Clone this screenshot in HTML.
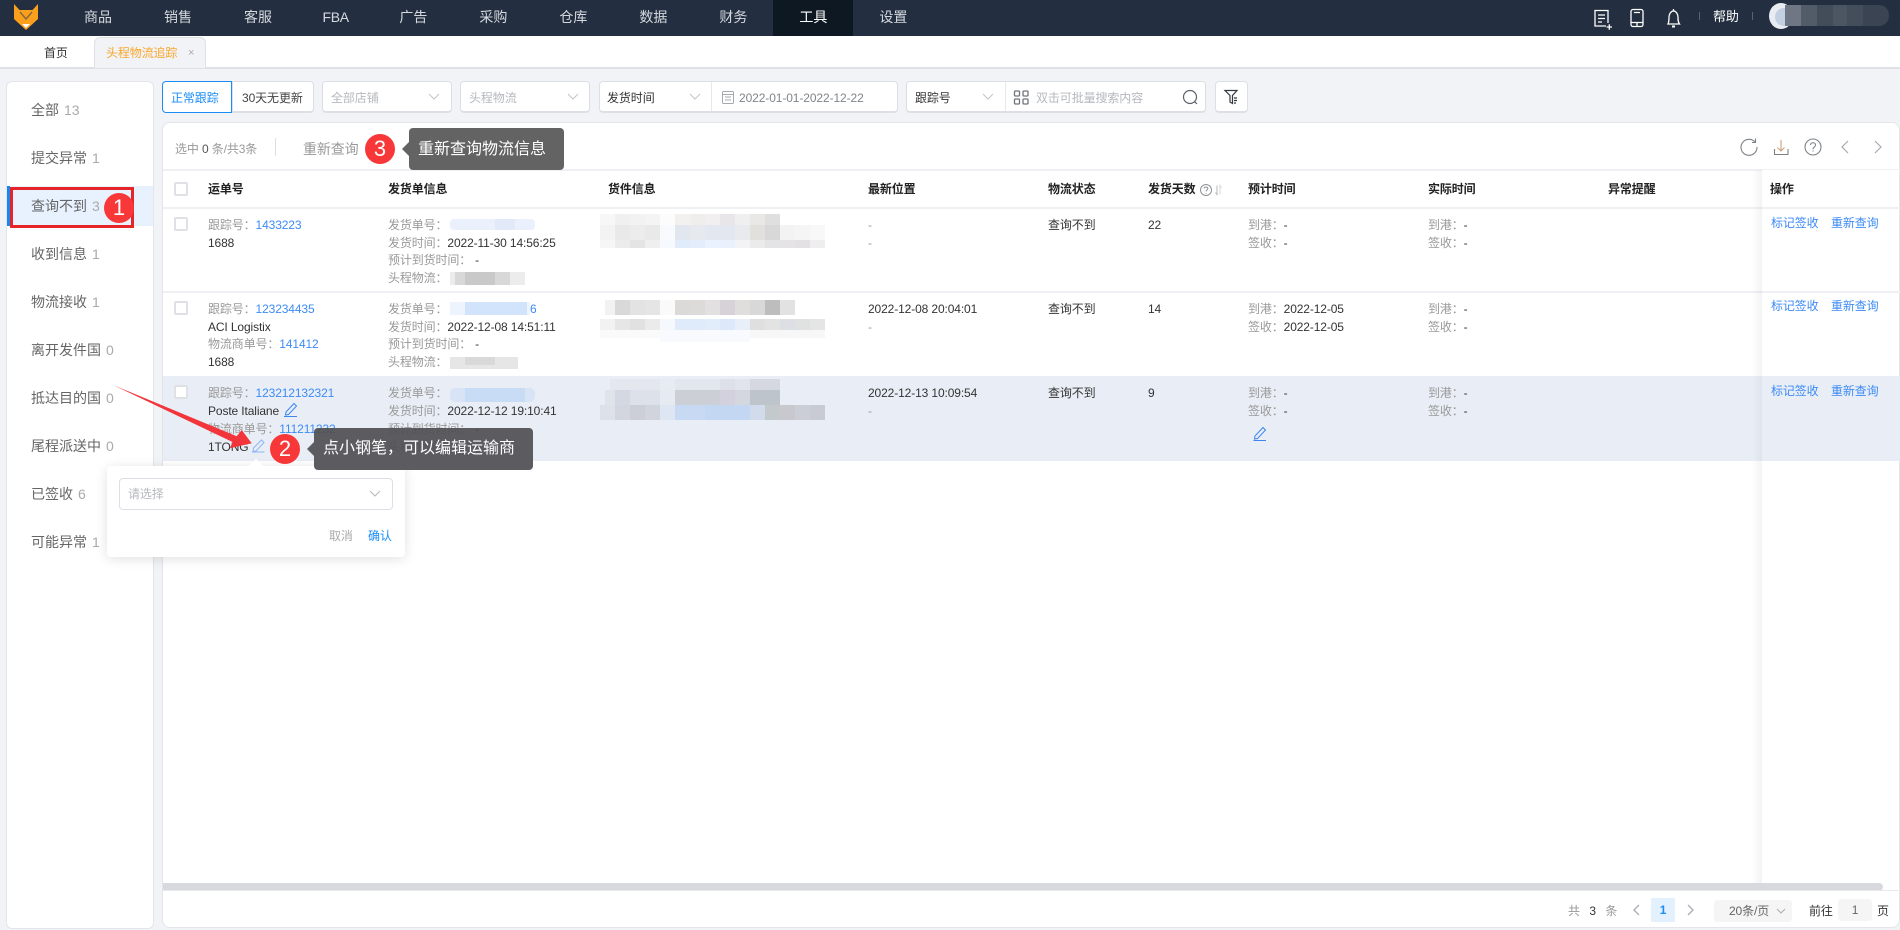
<!DOCTYPE html>
<html lang="zh-CN">
<head>
<meta charset="utf-8">
<title>头程物流追踪</title>
<style>
*{box-sizing:border-box}
html,body{margin:0;padding:0}
body{position:relative;width:1900px;height:930px;overflow:hidden;background:#f1f3f7;font-family:"Liberation Sans","Noto Sans CJK SC",sans-serif;font-size:12px;color:#333}
.a{position:absolute}
.t{position:absolute;white-space:nowrap;font-size:12px;line-height:18px;height:18px;color:#333;letter-spacing:-.12px}
.g{color:#999}
.b{color:#3d8bf5}
.h{font-weight:700;color:#222}
.nav{position:absolute;left:0;top:0;width:1900px;height:36px;background:#232f40}
.menu{position:absolute;left:58px;top:0;height:36px;display:flex}
.menu div{padding:0 26px;font-size:14px;line-height:34px;color:#d5d9df}
.menu div.fba{padding:0 24.5px;letter-spacing:-.3px}
.menu div.on{background:#0e1823;color:#fff}
.tabs{position:absolute;left:0;top:36px;width:1900px;height:33px;background:#fff;border-bottom:2px solid #dfe1e7}
.tab{position:absolute;left:94px;top:1px;width:112px;height:31px;background:#f1f3f7;border:1px solid #dfe1e7;border-bottom:none;border-radius:6px 6px 0 0}
.side{position:absolute;left:6px;top:81px;width:148px;height:848px;background:#fff;border:1px solid #e3e5ea;border-radius:6px}
.si{position:absolute;left:31px;font-size:14px;line-height:20px;height:20px;color:#666;white-space:nowrap}
.si span{color:#aaa;margin-left:5px}
.box{position:absolute;top:81px;height:32px;background:#fff;border:1px solid #dcdfe6;border-bottom-width:2px;border-radius:4px}
.ph{position:absolute;top:89px;font-size:12px;line-height:18px;color:#b5b8bd;white-space:nowrap;letter-spacing:-.1px}
.card{position:absolute;left:162px;top:122px;width:1738px;height:806px;background:#fff;border:1px solid #e3e5ea;border-radius:8px}
.line{position:absolute;left:163px;width:1737px;height:2px;background:#eff0f3}
.cb{position:absolute;left:174px;width:14px;height:14px;background:#fff;border:2px solid #dfe1e6;border-radius:2px}
.badge{position:absolute;width:30px;height:30px;border-radius:50%;background:#f83838;color:#fff;font-size:22px;line-height:30px;text-align:center}
.tip{position:absolute;color:#fff;font-size:16px;border-radius:4px;white-space:nowrap}
svg{position:absolute;overflow:visible}
</style>
</head>
<body>

<!-- top nav -->
<div class="nav"></div>
<svg style="left:0;top:0" width="60" height="36">
  <path d="M14 4 L19.500 10 L32.500 10 L38 4 L38 19 L26 30 L14 19 Z" fill="#fba01c"/>
  <path d="M20 12 L26 19 L32 12" fill="none" stroke="#8a6a3a" stroke-width="1.500"/>
  <path d="M22 24 L30 24 L26 28 Z" fill="#fff"/>
</svg>
<div class="menu">
  <div>商品</div><div>销售</div><div>客服</div><div class="fba">FBA</div><div>广告</div><div>采购</div><div>仓库</div><div>数据</div><div>财务</div><div class="on">工具</div><div>设置</div>
</div>
<svg style="left:1590px;top:6px" width="100" height="26" fill="none" stroke="#fff" stroke-width="1.300">
  <path d="M16 20 H5 V4.500 H18 V17"/><path d="M8 9 H15 M8 12.500 H15 M8 16 H12"/><path d="M16.500 21 H22 M19.300 18.200 V23.800"/>
  <rect x="41" y="3.500" width="12" height="17" rx="2"/><path d="M41 16.500 H53 M47 16.500 V20.500 M44 6.500 H50"/>
  <path d="M78 18 C79 16 79 14 79 11 C79 8 81 5 83.500 5 C86 5 88 8 88 11 C88 14 88 16 89.500 18 Z"/><path d="M82 20.500 H85" stroke-width="2"/><path d="M83.500 3 V5"/>
</svg>
<div class="a" style="left:1699px;top:12px;width:1px;height:8px;background:#59626f"></div>
<div class="t" style="left:1713px;top:8px;color:#fff;font-size:13px;">帮助</div>
<div class="a" style="left:1752px;top:12px;width:1px;height:8px;background:#59626f"></div>
<div class="a" style="left:1769px;top:3px;width:24px;height:26px;border-radius:50%;background:#e9edf2"></div>
<div class="a" style="left:1775px;top:8px;width:18px;height:18px;border-radius:50%;background:#c3d0e2"></div>
<div class="a" style="left:1785px;top:5px;width:104px;height:21px;border-radius:0 10px 10px 0;background:#3a4452"></div>
<div class="a" style="left:1785px;top:5px;width:16px;height:21px;background:#6e7783"></div>
<div class="a" style="left:1801px;top:5px;width:16px;height:21px;background:#525b68"></div>
<div class="a" style="left:1817px;top:5px;width:16px;height:21px;background:#434d5a"></div>
<div class="a" style="left:1833px;top:5px;width:14px;height:21px;background:#4c5562"></div>
<div class="a" style="left:1847px;top:5px;width:16px;height:21px;background:#444e5b"></div>

<!-- tabs -->
<div class="tabs"><div class="tab"></div></div>
<div class="t" style="left:44px;top:44px;color:#333">首页</div>
<div class="t" style="left:106px;top:44px;color:#f9a72b">头程物流追踪</div>
<div class="t" style="left:188px;top:44px;color:#aaa;font-size:11px">×</div>

<!-- sidebar -->
<div class="side"></div>
<div class="a" style="left:7px;top:186px;width:146px;height:40px;background:#e8f2fe"></div>
<div class="a" style="left:7px;top:186px;width:3px;height:40px;background:#1a86f0"></div>
<div class="si" style="top:100px">全部<span>13</span></div>
<div class="si" style="top:148px">提交异常<span>1</span></div>
<div class="si" style="top:196px">查询不到<span>3</span></div>
<div class="si" style="top:244px">收到信息<span>1</span></div>
<div class="si" style="top:292px">物流接收<span>1</span></div>
<div class="si" style="top:340px">离开发件国<span>0</span></div>
<div class="si" style="top:388px">抵达目的国<span>0</span></div>
<div class="si" style="top:436px">尾程派送中<span>0</span></div>
<div class="si" style="top:484px">已签收<span>6</span></div>
<div class="si" style="top:532px">可能异常<span>1</span></div>
<div class="a" style="left:10px;top:187px;width:124px;height:41px;border:3px solid #e6252b"></div>
<div class="badge" style="left:104px;top:193px">1</div>

<!-- filter row -->
<div class="box" style="left:232px;width:82px;border-radius:0 4px 4px 0"></div>
<div class="box" style="left:162px;width:70px;border:1px solid #1a8cf5;border-radius:4px 0 0 4px"></div>
<div class="ph" style="left:171px;color:#1a8cf5">正常跟踪</div>
<div class="ph" style="left:242px;color:#444">30天无更新</div>
<div class="box" style="left:322px;width:130px"></div>
<div class="ph" style="left:331px">全部店铺</div>
<div class="box" style="left:460px;width:130px"></div>
<div class="ph" style="left:469px">头程物流</div>
<div class="box" style="left:599px;width:299px"></div>
<div class="a" style="left:711px;top:82px;width:1px;height:29px;background:#e6e8ec"></div>
<div class="ph" style="left:607px;color:#333">发货时间</div>
<div class="ph" style="left:739px;color:#808589">2022-01-01-2022-12-22</div>
<div class="box" style="left:906px;width:300px"></div>
<div class="a" style="left:1005px;top:82px;width:1px;height:29px;background:#e6e8ec"></div>
<div class="ph" style="left:915px;color:#333">跟踪号</div>
<div class="ph" style="left:1036px">双击可批量搜索内容</div>
<div class="box" style="left:1215px;width:33px"></div>
<svg style="left:0;top:0" width="1300" height="120" fill="none" stroke="#c2c5ca" stroke-width="1">
  <path d="M429 94 L434 99 L439 94 M568 94 L573 99 L578 94 M690 94 L695 99 L700 94 M983 94 L988 99 L993 94"/>
  <g stroke="#a6aaaf"><rect x="722.500" y="91.500" width="11" height="12" rx="1"/><path d="M722.500 94.500 H733.500 M725 97 H731 M725 100 H731"/></g>
  <g stroke="#70757b" stroke-width="1.300"><rect x="1014.500" y="91" width="5" height="5" rx="1"/><rect x="1023" y="91" width="5" height="5" rx="1"/><rect x="1014.500" y="99" width="5" height="5" rx="1"/><rect x="1023" y="99" width="5" height="5" rx="1"/></g>
  <g stroke="#5d6268" stroke-width="1.200"><circle cx="1190" cy="97" r="6.500"/><path d="M1194.800 101.800 L1197 104"/></g>
  <g stroke="#33383e" stroke-width="1.200"><path d="M1225 90.500 H1237 L1232.500 95.500 V103.500 L1230 102 V95.500 Z"/><path d="M1234 98 H1237 M1234 100.500 H1237 M1234 103 H1236"/></g>
</svg>

<!-- main card -->
<div class="card"></div>
<div class="t g" style="left:175px;top:140px">选中 <span style="color:#555">0</span> 条/共3条</div>
<div class="a" style="left:275px;top:138px;width:1px;height:18px;background:#dcdfe6"></div>
<div class="t" style="left:303px;top:140px;font-size:14px;color:#999">重新查询</div>
<div class="line" style="top:169px"></div>
<div class="line" style="top:207px"></div>
<div class="line" style="top:291px"></div>
<div class="a" style="left:163px;top:376px;width:1737px;height:85px;background:#e9eef6"></div>

<!-- header -->
<div class="cb" style="top:182px"></div>
<div class="t h" style="left:208px;top:180px">运单号</div>
<div class="t h" style="left:388px;top:180px">发货单信息</div>
<div class="t h" style="left:608px;top:180px">货件信息</div>
<div class="t h" style="left:868px;top:180px">最新位置</div>
<div class="t h" style="left:1048px;top:180px">物流状态</div>
<div class="t h" style="left:1148px;top:180px">发货天数</div>
<svg style="left:1195px;top:180px" width="35" height="20" fill="none" stroke="#8e9296" stroke-width="1">
  <circle cx="11" cy="10" r="5.500"/><path d="M9.200 8.500 C9.200 6.500 12.800 6.500 12.800 8.500 C12.800 10 11 10 11 11.500 M11 13 V13.800"/>
  <path d="M22 5.500 V14.500 L20.500 12.500" stroke="#b4b7bb"/><path d="M25 14.500 V5.500 L26.500 7.500" stroke="#d3d5d8"/>
</svg>
<div class="t h" style="left:1248px;top:180px">预计时间</div>
<div class="t h" style="left:1428px;top:180px">实际时间</div>
<div class="t h" style="left:1608px;top:180px">异常提醒</div>

<!-- row 1 -->
<div class="cb" style="top:217px"></div>
<div class="t g" style="left:208px;top:216px">跟踪号：<span class="b">1433223</span></div>
<div class="t" style="left:208px;top:234px">1688</div>
<div class="t g" style="left:388px;top:216px">发货单号：</div>
<div class="t g" style="left:388px;top:234px">发货时间：<span style="color:#333">2022-11-30 14:56:25</span></div>
<div class="t g" style="left:388px;top:251px">预计到货时间：<span style="color:#333;margin-left:4px">-</span></div>
<div class="t g" style="left:388px;top:269px">头程物流：</div>
<div class="t g" style="left:868px;top:216px">-</div>
<div class="t g" style="left:868px;top:234px">-</div>
<div class="t" style="left:1048px;top:216px">查询不到</div>
<div class="t" style="left:1148px;top:216px">22</div>
<div class="t g" style="left:1248px;top:216px">到港：<span style="color:#333">-</span></div>
<div class="t g" style="left:1248px;top:234px">签收：<span style="color:#333">-</span></div>
<div class="t g" style="left:1428px;top:216px">到港：<span style="color:#333">-</span></div>
<div class="t g" style="left:1428px;top:234px">签收：<span style="color:#333">-</span></div>

<!-- row 2 -->
<div class="cb" style="top:301px"></div>
<div class="t g" style="left:208px;top:300px">跟踪号：<span class="b">123234435</span></div>
<div class="t" style="left:208px;top:318px">ACI Logistix</div>
<div class="t g" style="left:208px;top:335px">物流商单号：<span class="b">141412</span></div>
<div class="t" style="left:208px;top:353px">1688</div>
<div class="t g" style="left:388px;top:300px">发货单号：</div>
<div class="t b" style="left:530px;top:300px">6</div>
<div class="t g" style="left:388px;top:318px">发货时间：<span style="color:#333">2022-12-08 14:51:11</span></div>
<div class="t g" style="left:388px;top:335px">预计到货时间：<span style="color:#333;margin-left:4px">-</span></div>
<div class="t g" style="left:388px;top:353px">头程物流：</div>
<div class="t" style="left:868px;top:300px">2022-12-08 20:04:01</div>
<div class="t g" style="left:868px;top:318px">-</div>
<div class="t" style="left:1048px;top:300px">查询不到</div>
<div class="t" style="left:1148px;top:300px">14</div>
<div class="t g" style="left:1248px;top:300px">到港：<span style="color:#333">2022-12-05</span></div>
<div class="t g" style="left:1248px;top:318px">签收：<span style="color:#333">2022-12-05</span></div>
<div class="t g" style="left:1428px;top:300px">到港：<span style="color:#333">-</span></div>
<div class="t g" style="left:1428px;top:318px">签收：<span style="color:#333">-</span></div>

<!-- row 3 -->
<div class="cb" style="top:385px"></div>
<div class="t g" style="left:208px;top:384px">跟踪号：<span class="b">123212132321</span></div>
<div class="t" style="left:208px;top:402px">Poste Italiane</div>
<div class="t g" style="left:208px;top:420px">物流商单号：<span class="b">111211232</span></div>
<div class="t" style="left:208px;top:438px">1TONG</div>
<div class="t g" style="left:388px;top:384px">发货单号：</div>
<div class="t g" style="left:388px;top:402px">发货时间：<span style="color:#333">2022-12-12 19:10:41</span></div>
<div class="t g" style="left:388px;top:420px">预计到货时间：<span style="color:#333;margin-left:4px">-</span></div>
<div class="t g" style="left:388px;top:438px">头程物流：</div>
<div class="t" style="left:868px;top:384px">2022-12-13 10:09:54</div>
<div class="t g" style="left:868px;top:402px">-</div>
<div class="t" style="left:1048px;top:384px">查询不到</div>
<div class="t" style="left:1148px;top:384px">9</div>
<div class="t g" style="left:1248px;top:384px">到港：<span style="color:#333">-</span></div>
<div class="t g" style="left:1248px;top:402px">签收：<span style="color:#333">-</span></div>
<div class="t g" style="left:1428px;top:384px">到港：<span style="color:#333">-</span></div>
<div class="t g" style="left:1428px;top:402px">签收：<span style="color:#333">-</span></div>

<!-- pencils -->
<svg style="left:0;top:0" width="1300" height="470" fill="none" stroke="#3d86f2" stroke-width="1">
  <path d="M286 412 L294 403.500 L296.500 406 L288.500 414.500 L285.500 415 Z M284 416.500 H297"/>
  <path d="M1255 436 L1263 427.500 L1265.500 430 L1257.500 438.500 L1254.500 439 Z M1253.500 440.500 H1266"/>
  <path stroke="#8db6f2" d="M253.500 448 L261.500 440 L264 442.500 L256 451 L253 451.500 Z M252 452 H264.500"/>
</svg>

<!-- blurred regions -->
<svg style="left:0;top:0" width="1000" height="470" shape-rendering="crispEdges">
  <!-- ship no / logistics blur -->
  <rect x="450" y="219" width="85" height="11" rx="4" fill="#eaf1fc"/><rect x="495" y="219" width="20" height="11" fill="#e2eafa"/>
  <rect x="450" y="272" width="75" height="13" fill="#ececec"/><rect x="455" y="272" width="10" height="13" fill="#d8d8d8"/><rect x="465" y="272" width="30" height="13" fill="#c9c9c9"/><rect x="495" y="272" width="15" height="13" fill="#d8d8d8"/>
  <rect x="450" y="302" width="80" height="13" fill="#eef4fe"/><rect x="465" y="302" width="62" height="13" fill="#d2e3fc"/>
  <rect x="450" y="357" width="68" height="12" fill="#e6e6e6"/><rect x="465" y="357" width="30" height="8" fill="#d9d9d9"/>
  <rect x="450" y="388" width="85" height="14" rx="5" fill="#d8e4f6"/><rect x="465" y="388" width="60" height="14" fill="#c9dcf5"/>
  <!-- row 1 goods -->
  <rect x="600" y="214" width="15" height="11" fill="#f7f7f7"/><rect x="615" y="214" width="15" height="11" fill="#f0f0f0"/><rect x="630" y="214" width="15" height="11" fill="#f2f2f2"/><rect x="645" y="214" width="15" height="11" fill="#f4f4f4"/><rect x="660" y="214" width="15" height="11" fill="#fcfcfd"/><rect x="675" y="214" width="15" height="11" fill="#f2f1f0"/><rect x="690" y="214" width="15" height="11" fill="#efeeed"/><rect x="705" y="214" width="15" height="11" fill="#f1eff0"/><rect x="720" y="214" width="15" height="11" fill="#e8e6e9"/><rect x="735" y="214" width="15" height="11" fill="#efefef"/><rect x="750" y="214" width="15" height="11" fill="#e9e8e7"/><rect x="765" y="214" width="15" height="11" fill="#dfdfdf"/>
  <rect x="600" y="225" width="15" height="15" fill="#f3f3f3"/><rect x="615" y="225" width="15" height="15" fill="#e9e9e9"/><rect x="630" y="225" width="15" height="15" fill="#ececec"/><rect x="645" y="225" width="15" height="15" fill="#e9e9e9"/><rect x="660" y="225" width="15" height="15" fill="#f8fafd"/><rect x="675" y="225" width="15" height="15" fill="#e1e6ef"/><rect x="690" y="225" width="15" height="15" fill="#e6e9ed"/><rect x="705" y="225" width="15" height="15" fill="#e2e7f0"/><rect x="720" y="225" width="15" height="15" fill="#e3e7ef"/><rect x="735" y="225" width="15" height="15" fill="#e8eaee"/><rect x="750" y="225" width="15" height="15" fill="#e1e0dd"/><rect x="765" y="225" width="15" height="15" fill="#d8d8d8"/><rect x="780" y="225" width="15" height="15" fill="#f3f3f3"/><rect x="795" y="225" width="15" height="15" fill="#f5f5f5"/><rect x="810" y="225" width="15" height="15" fill="#f8f8f8"/>
  <rect x="600" y="240" width="15" height="8" fill="#f6f6f6"/><rect x="615" y="240" width="15" height="8" fill="#ececec"/><rect x="630" y="240" width="15" height="8" fill="#e4e4e4"/><rect x="645" y="240" width="15" height="8" fill="#efefef"/><rect x="660" y="240" width="15" height="8" fill="#f6f9fd"/><rect x="675" y="240" width="15" height="8" fill="#e1ecfb"/><rect x="690" y="240" width="15" height="8" fill="#e3edfb"/><rect x="705" y="240" width="15" height="8" fill="#eaf2fd"/><rect x="720" y="240" width="15" height="8" fill="#eaf1fc"/><rect x="735" y="240" width="15" height="8" fill="#f3f3f5"/><rect x="750" y="240" width="15" height="8" fill="#ebebeb"/><rect x="765" y="240" width="15" height="8" fill="#e4e3e5"/><rect x="780" y="240" width="15" height="8" fill="#e5e3e6"/><rect x="795" y="240" width="15" height="8" fill="#e3e1e3"/><rect x="810" y="240" width="15" height="8" fill="#eeeeee"/>
  <!-- row 2 goods -->
  <rect x="605" y="300" width="10" height="15" fill="#f2f2f2"/><rect x="615" y="300" width="15" height="15" fill="#d9d9d9"/><rect x="630" y="300" width="15" height="15" fill="#e3e3e3"/><rect x="645" y="300" width="15" height="15" fill="#e5e5e5"/><rect x="660" y="300" width="15" height="15" fill="#fafafa"/><rect x="675" y="300" width="15" height="15" fill="#dbdad9"/><rect x="690" y="300" width="15" height="15" fill="#dcdbda"/><rect x="705" y="300" width="15" height="15" fill="#e2e0e1"/><rect x="720" y="300" width="15" height="15" fill="#d6d2d8"/><rect x="735" y="300" width="15" height="15" fill="#dfdedc"/><rect x="750" y="300" width="15" height="15" fill="#d8d8d8"/><rect x="765" y="300" width="15" height="15" fill="#bdbdbd"/><rect x="780" y="300" width="15" height="15" fill="#e2e2e2"/>
  <rect x="600" y="319" width="15" height="11" fill="#f2f2f2"/><rect x="615" y="319" width="15" height="11" fill="#e6e6e6"/><rect x="630" y="319" width="15" height="11" fill="#e1e1e1"/><rect x="645" y="319" width="15" height="11" fill="#ebebeb"/><rect x="660" y="319" width="15" height="11" fill="#f5f8fd"/><rect x="675" y="319" width="15" height="11" fill="#dfeafb"/><rect x="690" y="319" width="15" height="11" fill="#dfeafb"/><rect x="705" y="319" width="15" height="11" fill="#e2edfc"/><rect x="720" y="319" width="15" height="11" fill="#dce9fb"/><rect x="735" y="319" width="15" height="11" fill="#e9eff8"/><rect x="750" y="319" width="15" height="11" fill="#dfdfdf"/><rect x="765" y="319" width="15" height="11" fill="#e3e3e3"/><rect x="780" y="319" width="15" height="11" fill="#dce0e5"/><rect x="795" y="319" width="15" height="11" fill="#e0e2e2"/><rect x="810" y="319" width="15" height="11" fill="#e5e5e5"/>
  <rect x="600" y="330" width="60" height="8" fill="#fafafa"/><rect x="660" y="330" width="90" height="12" fill="#f8fafd"/><rect x="750" y="330" width="75" height="8" fill="#f7f7f7"/>
  <!-- row 3 goods -->
  <rect x="610" y="379" width="50" height="11" fill="#e4e8ee"/><rect x="660" y="379" width="15" height="11" fill="#e7ebf2"/><rect x="675" y="379" width="45" height="11" fill="#e2e6ed"/><rect x="720" y="379" width="15" height="11" fill="#dde0e8"/><rect x="735" y="379" width="15" height="11" fill="#e1e4eb"/><rect x="750" y="379" width="30" height="11" fill="#d5d8e0"/>
  <rect x="605" y="390" width="10" height="15" fill="#dfe3ea"/><rect x="615" y="390" width="15" height="15" fill="#d4d8e2"/><rect x="630" y="390" width="30" height="15" fill="#dde1e9"/><rect x="660" y="390" width="15" height="15" fill="#e6eaf1"/><rect x="675" y="390" width="45" height="15" fill="#ccd0d6"/><rect x="720" y="390" width="15" height="15" fill="#d3d1dd"/><rect x="735" y="390" width="15" height="15" fill="#d5d7de"/><rect x="750" y="390" width="30" height="15" fill="#bdc4cc"/>
  <rect x="600" y="405" width="15" height="15" fill="#dde1e9"/><rect x="615" y="405" width="15" height="15" fill="#d4d6df"/><rect x="630" y="405" width="15" height="15" fill="#cdcfd8"/><rect x="645" y="405" width="15" height="15" fill="#d1d4dd"/><rect x="660" y="405" width="15" height="15" fill="#dfe6f3"/><rect x="675" y="405" width="30" height="15" fill="#c8daf3"/><rect x="705" y="405" width="45" height="15" fill="#c4d7f2"/><rect x="750" y="405" width="15" height="15" fill="#d1dbec"/><rect x="765" y="405" width="15" height="15" fill="#c4c9cc"/><rect x="780" y="405" width="15" height="15" fill="#c9c8ce"/><rect x="795" y="405" width="15" height="15" fill="#cbced6"/><rect x="810" y="405" width="15" height="15" fill="#c8cbd2"/>
</svg>

<!-- fixed operations col -->
<div class="a" style="left:1752px;top:170px;width:10px;height:713px;background:linear-gradient(to right,rgba(120,125,140,0),rgba(120,125,140,.09))"></div>
<div class="a" style="left:1762px;top:170px;width:137px;height:38px;background:#fff"></div>
<div class="a" style="left:1762px;top:207px;width:137px;height:2px;background:#eff0f3"></div>
<div class="t h" style="left:1770px;top:180px">操作</div>
<div class="t b" style="left:1771px;top:214px">标记签收</div><div class="t b" style="left:1831px;top:214px">重新查询</div>
<div class="t b" style="left:1771px;top:297px">标记签收</div><div class="t b" style="left:1831px;top:297px">重新查询</div>
<div class="t b" style="left:1771px;top:382px">标记签收</div><div class="t b" style="left:1831px;top:382px">重新查询</div>

<!-- toolbar icons -->
<svg style="left:1735px;top:135px" width="160" height="25" fill="none" stroke="#7d8186" stroke-width="1.100">
  <path d="M20 7 A8 8 0 1 0 22 12"/><path d="M17 7.500 H20.500 V3.500"/>
  <path d="M46 5 V16 M42.500 12.500 L46 16 L49.500 12.500" stroke="#c9a37a"/><path d="M39.500 14 V19.500 H53 V14"/>
  <circle cx="78" cy="12" r="8"/><path d="M75.500 10 C75.500 7 80.500 7 80.500 10 C80.500 12 78 12 78 14.200 M78 15.500 V16.500"/>
  <path d="M113 6 L107 12 L113 18 M140 6 L146 12 L140 18" stroke="#a2a6ac"/>
</svg>

<!-- scrollbar & pagination -->
<div class="a" style="left:163px;top:883px;width:1720px;height:8px;background:#d8d9de;border-radius:0 4px 4px 0"></div>
<div class="a" style="left:163px;top:890px;width:1737px;height:1px;background:#e8e9ed"></div>
<div class="t g" style="left:1568px;top:902px;letter-spacing:3px">共 <span style="color:#333">3</span> 条</div>
<div class="a" style="left:1651px;top:898px;width:24px;height:24px;background:#e3f1fe"></div>
<div class="t" style="left:1651px;top:901px;width:24px;text-align:center;color:#1a8cf5;font-weight:700">1</div>
<svg style="left:1625px;top:900px" width="80" height="20" fill="none" stroke="#a9adb3" stroke-width="1.300">
  <path d="M14 5 L9 10 L14 15 M63 5 L68 10 L63 15"/>
</svg>
<div class="a" style="left:1714px;top:900px;width:78px;height:22px;background:#f5f5f5;border-radius:3px"></div>
<div class="t" style="left:1729px;top:902px;color:#666">20条/页</div>
<svg style="left:1775px;top:905px" width="14" height="12" fill="none" stroke="#a9adb3"><path d="M2 4 L6 8 L10 4"/></svg>
<div class="t" style="left:1809px;top:902px">前往</div>
<div class="a" style="left:1838px;top:899px;width:34px;height:22px;background:#f5f5f5;border-radius:3px"></div>
<div class="t" style="left:1838px;top:901px;width:34px;text-align:center;color:#666">1</div>
<div class="t" style="left:1877px;top:902px">页</div>

<!-- popover -->
<div class="a" style="left:107px;top:466px;width:298px;height:91px;background:#fff;border-radius:4px;box-shadow:0 2px 12px rgba(0,0,0,.12)"></div>
<div class="a" style="left:251px;top:461px;width:10px;height:10px;background:#fff;transform:rotate(45deg)"></div>
<div class="a" style="left:119px;top:478px;width:274px;height:32px;background:#fff;border:1px solid #dcdfe6;border-radius:4px"></div>
<div class="t" style="left:128px;top:485px;color:#b5b8bd">请选择</div>
<svg style="left:368px;top:488px" width="16" height="12" fill="none" stroke="#b4b8bd"><path d="M2 3 L7 8 L12 3"/></svg>
<div class="t" style="left:329px;top:527px;color:#aaa">取消</div>
<div class="t" style="left:368px;top:527px;color:#1a8cf5">确认</div>

<!-- annotations -->
<div class="badge" style="left:365px;top:134px">3</div>
<div class="a" style="left:402px;top:142px;width:0;height:0;border-top:7px solid transparent;border-bottom:7px solid transparent;border-right:7px solid #636363"></div>
<div class="tip" style="left:409px;top:128px;width:155px;height:42px;line-height:43px;padding-left:9px;background:#636363">重新查询物流信息</div>

<svg style="left:0;top:0" width="300" height="470">
  <path d="M113 385 L236.700 436.200 L241.700 430 L251.700 443.300 L230 448.300 L232.500 442 Z" fill="#f2353a"/>
</svg>
<div class="badge" style="left:270px;top:434px">2</div>
<div class="a" style="left:307px;top:442px;width:0;height:0;border-top:7px solid transparent;border-bottom:7px solid transparent;border-right:7px solid rgba(80,80,84,.93)"></div>
<div class="tip" style="left:314px;top:428px;width:219px;height:42px;line-height:42px;padding-left:9px;background:rgba(80,80,84,.93)">点小钢笔，可以编辑运输商</div>

</body>
</html>
